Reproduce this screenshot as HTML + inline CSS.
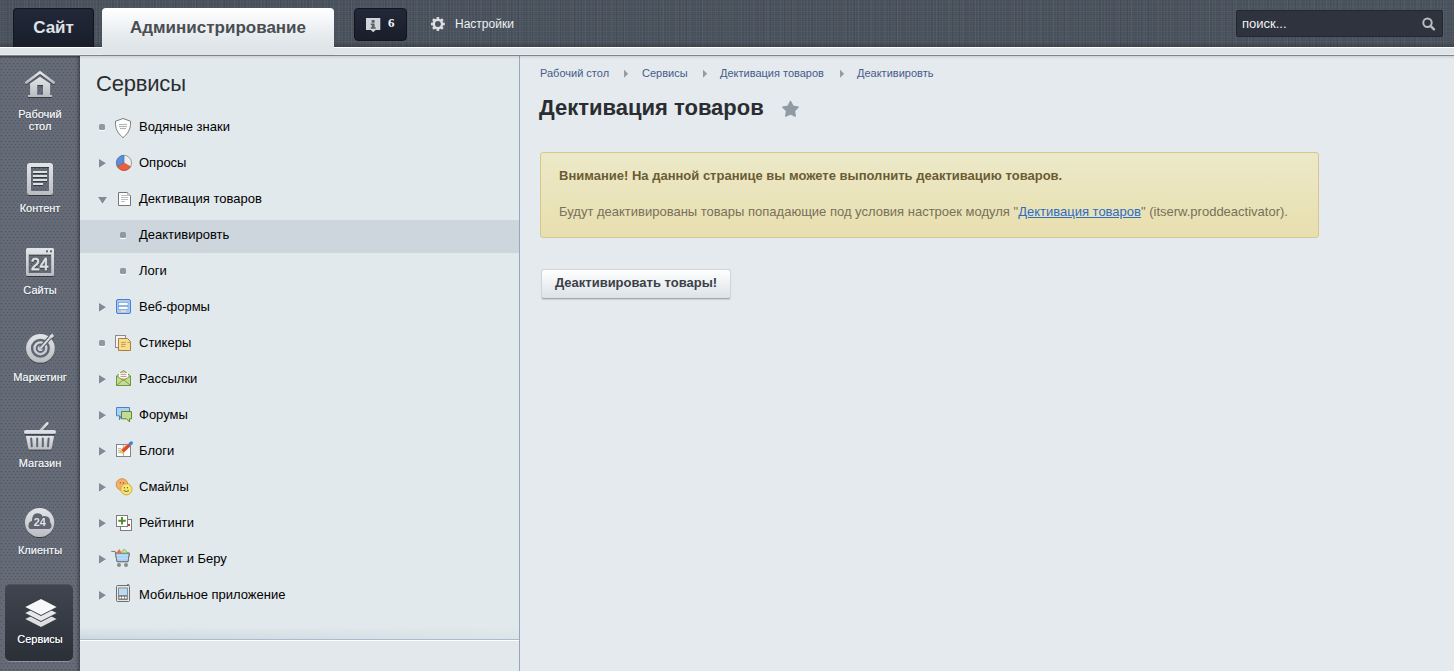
<!DOCTYPE html>
<html><head><meta charset="utf-8">
<style>
*{margin:0;padding:0;box-sizing:border-box}
html,body{width:1454px;height:671px;overflow:hidden}
body{position:relative;background:#e4eaed;font-family:"Liberation Sans",sans-serif;}
.abs{position:absolute}
#hdr{left:0;top:0;width:1454px;height:47px;background-color:#4b535e;
 background-image:linear-gradient(rgba(0,0,0,0) 90%,rgba(0,0,0,.2)),repeating-linear-gradient(90deg,rgba(255,255,255,.035) 0 1px,transparent 1px 3px),repeating-linear-gradient(90deg,rgba(0,0,0,.06) 0 1px,transparent 1px 7px),repeating-linear-gradient(90deg,rgba(255,255,255,.03) 0 1px,transparent 1px 13px),repeating-linear-gradient(0deg,rgba(0,0,0,.05) 0 1px,transparent 1px 2px),repeating-linear-gradient(0deg,rgba(255,255,255,.025) 0 1px,transparent 1px 5px);}
#strip{left:0;top:47px;width:1454px;height:8px;background:#dee5e8;border-top:1px solid #fff;}
#strip2{left:0;top:54px;width:1454px;height:1px;background:#e9eef0}
#dline{left:0;top:55px;width:1454px;height:1px;background:#7e8387}
#site{left:13px;top:8px;width:81px;height:39px;background:linear-gradient(#222839,#1a1e2a);border:1px solid #12151d;border-bottom:0;border-radius:4px 4px 0 0;color:#dfe3e8;font-weight:bold;font-size:17px;text-align:center;line-height:19px;padding-top:9px}
#admin{left:102px;top:8px;width:232px;height:47px;background:linear-gradient(#fff,#e6ebee 60%,#dfe5e8 83%);border-radius:4px 4px 0 0;color:#4a4d52;font-weight:bold;font-size:17px;text-align:center;line-height:19px;padding-top:10px}
#notif{left:354px;top:8px;width:53px;height:33px;background:linear-gradient(#222839,#1a1e2a);border:1px solid #12151d;border-radius:4px}
#n6{left:388px;top:15px;color:#f4f6f8;font-size:13px;font-weight:bold;line-height:15px;font-family:"Liberation Serif",serif}
#settings{left:455px;top:17px;color:#eef1f4;font-size:12px;line-height:14px}
#search{left:1236px;top:10px;width:207px;height:27px;background:#2e333e;border:1px solid #22262e;border-radius:2px;color:#eef1f4;font-size:13px;line-height:25px;padding-left:5px}
#side{left:0;top:56px;width:80px;height:615px;background-color:#656b77;
 background-image:radial-gradient(circle at 1.5px 1.5px,rgba(30,34,42,.27) 0.6px,transparent 1.15px),radial-gradient(circle at 1.5px 1.5px,rgba(30,34,42,.27) 0.55px,transparent 1.05px);background-size:4px 6px,4px 6px;background-position:0 0,2px 3px;box-shadow:inset -3px 0 3px -1px rgba(0,0,0,.3), inset 0 2px 2px -1px rgba(0,0,0,.4)}
#panel{left:80px;top:56px;width:439px;height:615px;background:#e2e9ec;}
#vline{left:519px;top:56px;width:1px;height:615px;background:#93a8bf}
#hline{left:80px;top:639px;width:439px;height:1px;background:#a9bccb}
#hshadow{left:80px;top:627px;width:439px;height:12px;background:linear-gradient(rgba(130,155,180,0),rgba(130,155,180,.22));-webkit-mask-image:linear-gradient(to right,#000,rgba(0,0,0,.25))}
#hline2{left:80px;top:640px;width:439px;height:1px;background:#fff}
#cshadow{left:80px;top:56px;width:1374px;height:3px;background:linear-gradient(rgba(0,0,0,.1),rgba(0,0,0,0))}
.sbi{position:absolute;left:0;width:80px;text-align:center;color:#eef1f4;font-size:11px;line-height:12px;text-shadow:0 0 0.6px rgba(255,255,255,.7),0 1px 1px rgba(0,0,0,.25)}
.mtitle{left:96px;top:71px;font-size:22px;color:#2b2e31;line-height:25px;letter-spacing:-0.2px}
.mi{position:absolute;left:139px;font-size:13px;color:#000;line-height:16px}
.bul{position:absolute;width:6px;height:6px;background:#8f99a3;border-radius:1.5px;box-shadow:0 1px 0 #fff}
.ico{position:absolute;overflow:visible}
#sel{left:80px;top:220px;width:439px;height:33px;background:#ccd6dc}
#svc{left:5px;top:584px;width:68px;height:77px;border-radius:5px;background:linear-gradient(#41454f,#2b2f38);box-shadow:0 1px 0 rgba(255,255,255,.25), inset 0 1px 0 rgba(255,255,255,.08)}
.bc{position:absolute;top:67px;font-size:11px;color:#475b8a;line-height:13px}
#title{left:539px;top:95px;font-size:22px;font-weight:bold;color:#2a2d31;line-height:26px}
#alert{left:540px;top:152px;width:779px;height:86px;background:linear-gradient(#ece9c9,#e8dfae);border:1px solid #d6c88c;border-radius:3px}
#at1{left:559px;top:168px;font-size:13px;font-weight:bold;color:#6b5c34;line-height:16px}
#at2{left:559px;top:204px;font-size:13px;color:#77705a;line-height:16px}
#at2 a{color:#2f6cc5;text-decoration:underline}
#btn{left:541px;top:269px;width:190px;height:30px;background:linear-gradient(#fff,#dce2e5);border:1px solid #cfd5d8;border-bottom-color:#a3abb0;border-radius:3px;font-size:13px;font-weight:bold;color:#3b4048;text-align:center;line-height:15px;padding-top:5px;box-shadow:0 1px 1px rgba(0,0,0,.12)}
</style></head><body>
<div id="hdr" class="abs"></div>
<div id="strip" class="abs"></div>
<div id="strip2" class="abs"></div>
<div id="dline" class="abs"></div>
<div id="site" class="abs">Сайт</div>
<div id="admin" class="abs">Администрирование</div>
<div id="notif" class="abs"></div>
<svg class="ico" style="left:366px;top:18px" width="16" height="16"><path d="M0 0 H14.3 V12 H9.6 L7.2 14.3 L4.8 12 H0 Z" fill="#d1d5d9"/><path d="M5.6 2 H8.6 V4.7 H5.6 Z M4.7 5.6 H8.6 V9.2 H9.7 V10.8 H4.7 V9.2 H5.8 V7 H4.7 Z" fill="#5d6168"/></svg>
<div id="n6" class="abs">6</div>
<svg class="ico" style="left:428px;top:14px" width="20" height="20"><g transform="translate(9.9,10)"><circle r="4.15" fill="none" stroke="#dcdfe2" stroke-width="2.5"/><rect x="-1.3" y="-6.9" width="2.6" height="3" transform="rotate(0)" fill="#dcdfe2"/><rect x="-1.3" y="-6.9" width="2.6" height="3" transform="rotate(45)" fill="#dcdfe2"/><rect x="-1.3" y="-6.9" width="2.6" height="3" transform="rotate(90)" fill="#dcdfe2"/><rect x="-1.3" y="-6.9" width="2.6" height="3" transform="rotate(135)" fill="#dcdfe2"/><rect x="-1.3" y="-6.9" width="2.6" height="3" transform="rotate(180)" fill="#dcdfe2"/><rect x="-1.3" y="-6.9" width="2.6" height="3" transform="rotate(225)" fill="#dcdfe2"/><rect x="-1.3" y="-6.9" width="2.6" height="3" transform="rotate(270)" fill="#dcdfe2"/><rect x="-1.3" y="-6.9" width="2.6" height="3" transform="rotate(315)" fill="#dcdfe2"/></g></svg>
<div id="settings" class="abs">Настройки</div>
<div id="search" class="abs">поиск...</div>
<svg class="ico" style="left:1420px;top:16px" width="18" height="16"><circle cx="7.5" cy="6.8" r="4.2" fill="none" stroke="#b9bdc2" stroke-width="2"/><path d="M10.5 9.8 L14 13.3" stroke="#b9bdc2" stroke-width="2.4" stroke-linecap="round"/></svg>

<div id="side" class="abs"></div>
<div id="svc" class="abs"></div>

<svg class="ico" style="left:0;top:56px" width="80" height="615">
 <defs>
  <linearGradient id="gi" x1="0" y1="0" x2="0" y2="1"><stop offset="0" stop-color="#e3e6e8"/><stop offset="1" stop-color="#b9bdc1"/></linearGradient>
  <filter id="sh" x="-20%" y="-20%" width="140%" height="140%"><feDropShadow dx="0" dy="1" stdDeviation="0.6" flood-color="#000" flood-opacity="0.45"/></filter>
 </defs>
 <g filter="url(#sh)">
 <!-- house: abs y offset 56 -->
 <g transform="translate(0,-56)">
  <path d="M26.3 82.5 L40 72.3 L53.7 82.5" fill="none" stroke="url(#gi)" stroke-width="2.6" stroke-linecap="round" stroke-linejoin="miter"/>
  <path d="M30.1 83.5 L40 76.8 L50.1 83.5 V95 H52 V97 H28 V95 H30.1 Z M37.2 85 V94.8 H43 V85 Z" fill="url(#gi)" fill-rule="evenodd"/>
 </g>
 <!-- content doc -->
 <g transform="translate(0,-56)">
  <path d="M30 163 H50 Q53 163 53 166 V192 Q53 195 50 195 H30 Q27 195 27 192 V166 Q27 163 30 163 Z M31 167 V191 H49 V167 Z" fill="url(#gi)" fill-rule="evenodd"/>
  <path d="M33 172h14M33 176h14M33 180h14M33 184h10" stroke="#dde0e3" stroke-width="2"/>
 </g>
 <!-- sites -->
 <g transform="translate(0,-56)">
  <path d="M27.5 248 H52.5 Q54 248 54 249.5 V274.5 Q54 276 52.5 276 H27.5 Q26 276 26 274.5 V249.5 Q26 248 27.5 248 Z M28.7 254.5 V273 H51.2 V254.5 Z" fill="url(#gi)" fill-rule="evenodd"/>
  <rect x="46" y="250.3" width="2" height="2" fill="#5f6571"/><rect x="50" y="250.3" width="2" height="2" fill="#5f6571"/>
  <text x="31" y="269.9" font-family="Liberation Sans" font-size="16.5" stroke="#dfe2e5" stroke-width="0.7" textLength="17.6" lengthAdjust="spacingAndGlyphs" fill="#dfe2e5">24</text>
 </g>
 <!-- target -->
 <g transform="translate(0,-56)">
  <circle cx="40.4" cy="348.3" r="14.3" fill="url(#gi)"/>
  <circle cx="40.4" cy="348.3" r="8.3" fill="none" stroke="#5f6571" stroke-width="2.4"/>
  <circle cx="40.4" cy="348.3" r="3.75" fill="none" stroke="#5f6571" stroke-width="1.9"/>
  <path d="M40.4 348.3 L50 337.5" stroke="#5f6571" stroke-width="4.2"/>
  <path d="M40.4 348.3 L52 335.3" stroke="#d9dcdf" stroke-width="2"/>
  <path d="M49.5 336 L52.5 333.5 L54 336 L51.8 338.3 Z" fill="#d9dcdf"/>
 </g>
 <!-- basket -->
 <g transform="translate(0,-56)">
  <path d="M47.3 423.3 L40.3 430.8" stroke="url(#gi)" stroke-width="2.6" stroke-linecap="round"/>
  <rect x="24" y="430" width="32" height="3.8" rx="1.9" fill="#dde0e3"/>
  <path d="M25.9 436 H54 L51.8 448 Q51.5 449.6 50 449.6 H30 Q28.5 449.6 28.2 448 Z" fill="url(#gi)"/>
  <path d="M31.2 438.5 L31.8 446.3 M37.2 438.5 V446.3 M42.8 438.5 V446.3 M48.6 438.5 L48 446.3" stroke="#5f6571" stroke-width="2" stroke-linecap="round"/>
 </g>
 <!-- clients -->
 <g transform="translate(0,-56)">
  <circle cx="39.6" cy="522.5" r="14.6" fill="url(#gi)"/>
  <path d="M30.5 529 Q28.5 529 28.5 525.5 Q28.5 521.5 32 521 Q32 513.5 37.3 513.3 Q41.5 513.3 42.5 516.5 Q44 515.5 46 516.2 Q50.6 517.5 50 522 Q51.5 523.5 51.5 526 Q51.3 529 48.5 529 Z" fill="#5f6571"/>
  <text x="39.8" y="526.3" text-anchor="middle" font-family="Liberation Sans" font-weight="bold" font-size="11" fill="#dfe2e5">24</text>
 </g>
 </g>
</svg>

<svg class="ico" style="left:0;top:580px" width="80" height="60"><g transform="translate(0,-580)">
 <path d="M41 611.3 L56.6 619.1 L41 627 L25.3 619.1 Z" fill="#dcdee1"/>
 <path d="M41 605.3 L56.6 613.1 L41 621 L25.3 613.1 Z" fill="#e6e8ea" stroke="#383c46" stroke-width="1.6" stroke-linejoin="miter"/>
 <path d="M41 605.3 L56.6 613.1 L41 621 L25.3 613.1 Z" fill="#e6e8ea"/>
 <path d="M41 599 L56.6 607 L41 615 L25.3 607 Z" fill="#f7f8f9" stroke="#3a3e48" stroke-width="1.6" stroke-linejoin="miter"/>
 <path d="M41 599 L56.6 607 L41 615 L25.3 607 Z" fill="#f7f8f9"/>
</g></svg>
<div class="sbi" style="top:108px">Рабочий<br>стол</div>
<div class="sbi" style="top:202px">Контент</div>
<div class="sbi" style="top:284px">Сайты</div>
<div class="sbi" style="top:371px">Маркетинг</div>
<div class="sbi" style="top:457px">Магазин</div>
<div class="sbi" style="top:544px">Клиенты</div>
<div class="sbi" style="top:633px;color:#fff">Сервисы</div>

<div id="panel" class="abs"></div>
<div id="vline" class="abs"></div>
<div id="cshadow" class="abs"></div>
<div id="hshadow" class="abs"></div>
<div id="hline" class="abs"></div>
<div id="hline2" class="abs"></div>
<div id="sel" class="abs"></div>

<div class="abs mtitle">Сервисы</div>
<div class="bul" style="left:99px;top:124px"></div>
<svg class="ico" style="left:112px;top:114px" width="24" height="26"><path d="M11 4.5 L3.5 7.2 L3.5 10.5 C4 16.5 7 20.5 11 23.6 C15 20.5 18 16.5 18.5 10.5 L18.5 7.2 Z" fill="#fff" stroke="#7b7b7b" stroke-width="1"/><path d="M7 10.6h8M7 12.6h8M8 14.6h6" stroke="#a3a3a3" stroke-width="0.9"/></svg>
<div class="mi" style="top:119px">Водяные знаки</div>
<svg class="ico" style="left:96px;top:156px" width="14" height="16"><path d="M3 3 L10 7.3 L3 11.7 Z" fill="#fff" transform="translate(0,0.8)"/><path d="M3 3 L10 7.3 L3 11.7 Z" fill="#808c99"/></svg>
<svg class="ico" style="left:112px;top:150px" width="24" height="26"><circle cx="12" cy="12.9" r="7.6" fill="#ececec" stroke="#8a8a8a" stroke-width="0.8"/><path d="M12 12.9 L12 5.3 A7.6 7.6 0 0 0 5.4 16.7 Z" fill="#5a8fd6" stroke="#3f6fb8" stroke-width="0.6"/><path d="M12 12.9 L5.4 16.7 A7.6 7.6 0 0 0 18.6 16.7 Z" fill="#e4623f" stroke="#c8401f" stroke-width="0.6"/></svg>
<div class="mi" style="top:155px">Опросы</div>
<svg class="ico" style="left:96px;top:190px" width="14" height="16"><path d="M2 7 L11 7 L6.5 13.7 Z" fill="#fff" transform="translate(0,0.8)"/><path d="M2 7 L11 7 L6.5 13.7 Z" fill="#808c99"/></svg>
<svg class="ico" style="left:112px;top:186px" width="24" height="26"><path d="M6.5 6.5 H15.5 L18.5 9.5 V19.5 H6.5 Z" fill="#fff" stroke="#767676" stroke-width="1"/><path d="M15.5 6.5 V9.5 H18.5" fill="#ddd" stroke="#999" stroke-width="0.6"/><path d="M9 9.5h6M9 11.5h7M9 13.5h7M9 15.5h4" stroke="#b8b8b8" stroke-width="0.9"/></svg>
<div class="mi" style="top:191px">Дективация товаров</div>
<div class="bul" style="left:120px;top:232px"></div>
<div class="mi" style="top:227px">Деактивировть</div>
<div class="bul" style="left:120px;top:268px"></div>
<div class="mi" style="top:263px">Логи</div>
<svg class="ico" style="left:96px;top:300px" width="14" height="16"><path d="M3 3 L10 7.3 L3 11.7 Z" fill="#fff" transform="translate(0,0.8)"/><path d="M3 3 L10 7.3 L3 11.7 Z" fill="#808c99"/></svg>
<svg class="ico" style="left:112px;top:294px" width="24" height="26"><rect x="4.5" y="5.5" width="14" height="14" rx="1.5" fill="#a9c9ee" stroke="#4a7dcb" stroke-width="1"/><rect x="6.5" y="8.6" width="9.5" height="2.6" fill="#fff" stroke="#5a8ad0" stroke-width="0.5"/><rect x="6.5" y="12.6" width="9.5" height="2.6" fill="#fff" stroke="#5a8ad0" stroke-width="0.5"/><rect x="9" y="16.3" width="5" height="1.6" fill="#f1d9c8"/></svg>
<div class="mi" style="top:299px">Веб-формы</div>
<div class="bul" style="left:99px;top:340px"></div>
<svg class="ico" style="left:112px;top:330px" width="24" height="26"><rect x="3.5" y="5.5" width="10" height="12" fill="#f4f4f4" stroke="#8b8b8b" stroke-width="1"/><path d="M6.5 8.5 H15.5 L18.5 11.5 V20.5 H6.5 Z" fill="#f7de8e" stroke="#b07a3e" stroke-width="1"/><path d="M9 12.4h5M9 14.4h5M9 16.4h4M15.5 12.4h3" stroke="#c69250" stroke-width="0.9"/></svg>
<div class="mi" style="top:335px">Стикеры</div>
<svg class="ico" style="left:96px;top:372px" width="14" height="16"><path d="M3 3 L10 7.3 L3 11.7 Z" fill="#fff" transform="translate(0,0.8)"/><path d="M3 3 L10 7.3 L3 11.7 Z" fill="#808c99"/></svg>
<svg class="ico" style="left:112px;top:366px" width="24" height="26"><path d="M4.5 10 L11.5 4.5 L18.5 10 V19.5 H4.5 Z" fill="#c6da98" stroke="#6b9a3b" stroke-width="1"/><rect x="7" y="7" width="9" height="5" fill="#fff"/><path d="M8.5 8.3h6M8.5 10.4h6" stroke="#d9707a" stroke-width="0.9"/><path d="M4.5 10 L11.5 14.5 L18.5 10 M4.5 19.5 L11.5 13.5 L18.5 19.5" fill="none" stroke="#6b9a3b" stroke-width="0.9"/></svg>
<div class="mi" style="top:371px">Рассылки</div>
<svg class="ico" style="left:96px;top:408px" width="14" height="16"><path d="M3 3 L10 7.3 L3 11.7 Z" fill="#fff" transform="translate(0,0.8)"/><path d="M3 3 L10 7.3 L3 11.7 Z" fill="#808c99"/></svg>
<svg class="ico" style="left:112px;top:402px" width="24" height="26"><path d="M4.5 5.5 H17.5 V13.8 H9 L7.5 17.8 V13.8 H4.5 Z" fill="#a9d1f3" stroke="#4a80cc" stroke-width="1" stroke-linejoin="round"/><path d="M9.5 9.5 H19.5 V16.8 H17.5 L17.6 20 L14.5 16.8 H9.5 Z" fill="#c6da98" stroke="#5b8a2c" stroke-width="1" stroke-linejoin="round"/></svg>
<div class="mi" style="top:407px">Форумы</div>
<svg class="ico" style="left:96px;top:444px" width="14" height="16"><path d="M3 3 L10 7.3 L3 11.7 Z" fill="#fff" transform="translate(0,0.8)"/><path d="M3 3 L10 7.3 L3 11.7 Z" fill="#808c99"/></svg>
<svg class="ico" style="left:112px;top:438px" width="24" height="26"><rect x="4.5" y="6.5" width="14" height="12" fill="#fff" stroke="#838383" stroke-width="1"/><path d="M11.4 6.5 V18.5" stroke="#9a9a9a" stroke-width="0.8"/><path d="M6 10.4h3M6 12.4h3M6 14.4h3" stroke="#aaa" stroke-width="0.9"/><path d="M10.3 13.3 L17.6 6.6" stroke="#e0461f" stroke-width="3.6"/><path d="M9.2 12.2 L16.5 5.5" stroke="#f08a60" stroke-width="1"/><path d="M8.8 14.7 L10.6 13" stroke="#f2c83a" stroke-width="3.4"/><path d="M17.4 6.8 L18.2 6" stroke="#fff" stroke-width="3.6"/><path d="M18.2 6 L19.3 5" stroke="#4a7fd0" stroke-width="3.4" stroke-linecap="round"/></svg>
<div class="mi" style="top:443px">Блоги</div>
<svg class="ico" style="left:96px;top:480px" width="14" height="16"><path d="M3 3 L10 7.3 L3 11.7 Z" fill="#fff" transform="translate(0,0.8)"/><path d="M3 3 L10 7.3 L3 11.7 Z" fill="#808c99"/></svg>
<svg class="ico" style="left:112px;top:474px" width="24" height="26"><circle cx="10" cy="10.5" r="5.8" fill="#f6b06a" stroke="#c98a34" stroke-width="0.9"/><path d="M8.3 8v1.6M11.3 8v1.6" stroke="#7a5a30" stroke-width="0.9"/><circle cx="14.4" cy="15.3" r="5.6" fill="#fbe46a" stroke="#c9a434" stroke-width="0.9"/><path d="M12.4 13v1.4M15.4 13v1.4" stroke="#555" stroke-width="0.9"/><path d="M11.5 16.6 Q14.2 18.4 17 16.6" fill="none" stroke="#555" stroke-width="0.9"/></svg>
<div class="mi" style="top:479px">Смайлы</div>
<svg class="ico" style="left:96px;top:516px" width="14" height="16"><path d="M3 3 L10 7.3 L3 11.7 Z" fill="#fff" transform="translate(0,0.8)"/><path d="M3 3 L10 7.3 L3 11.7 Z" fill="#808c99"/></svg>
<svg class="ico" style="left:112px;top:510px" width="24" height="26"><rect x="8.5" y="9.5" width="11" height="11" fill="#fff" stroke="#7d7d7d" stroke-width="1"/><rect x="4.5" y="5.5" width="11" height="11" fill="#fff" stroke="#7d7d7d" stroke-width="1"/><path d="M10 7v7.5M6.3 10.8h7.5" stroke="#4f8d2a" stroke-width="1.9"/><rect x="16" y="14" width="2" height="2" fill="#e0301c"/></svg>
<div class="mi" style="top:515px">Рейтинги</div>
<svg class="ico" style="left:96px;top:552px" width="14" height="16"><path d="M3 3 L10 7.3 L3 11.7 Z" fill="#fff" transform="translate(0,0.8)"/><path d="M3 3 L10 7.3 L3 11.7 Z" fill="#808c99"/></svg>
<svg class="ico" style="left:112px;top:546px" width="24" height="26"><path d="M-0.7 5.4 H3.2 L5 15.7 H16 L17.3 7.1 H3.4" fill="none" stroke="#777" stroke-width="1"/><path d="M3.6 7.6 H16.8 L15.6 15.2 H5.3 Z" fill="#a9d0f8"/><path d="M4.2 9.8 H16.4 M4.6 12.4 H16" stroke="#c6e2fb" stroke-width="0.8"/><path d="M3.4 7.1 H17.3 L16 15.7 H5 Z" fill="none" stroke="#777" stroke-width="1"/><path d="M4 7 L7.5 3 L9.5 7 Z" fill="#f26a3a"/><path d="M8.5 7 L12.3 3 L16 7 Z" fill="#c9df9c" stroke="#6b9a3b" stroke-width="0.6"/><circle cx="7" cy="19" r="2" fill="#8a8a8a"/><circle cx="14" cy="19" r="2" fill="#8a8a8a"/></svg>
<div class="mi" style="top:551px">Маркет и Беру</div>
<svg class="ico" style="left:96px;top:588px" width="14" height="16"><path d="M3 3 L10 7.3 L3 11.7 Z" fill="#fff" transform="translate(0,0.8)"/><path d="M3 3 L10 7.3 L3 11.7 Z" fill="#808c99"/></svg>
<svg class="ico" style="left:112px;top:582px" width="24" height="26"><rect x="4.5" y="3.5" width="13" height="16" rx="1" fill="#e6e6e6" stroke="#6f6f6f" stroke-width="1"/><rect x="15" y="2.2" width="2.2" height="1.6" fill="#6f6f6f"/><rect x="6.3" y="5.6" width="9.4" height="12.2" fill="#666"/><rect x="7" y="6.3" width="8" height="7" fill="#b8dcf6"/><rect x="7.3" y="14.6" width="2" height="2" fill="#fff"/><rect x="10" y="14.6" width="2" height="2" fill="#fff"/><rect x="12.7" y="14.6" width="2" height="2" fill="#fff"/></svg>
<div class="mi" style="top:587px">Мобильное приложение</div>

<div class="bc" style="left:540px">Рабочий стол</div>
<svg class="ico" style="left:622px;top:69px" width="8" height="8"><path d="M2 0.8 L6.2 4.8 L2 8.8 Z" fill="#979b9f"/></svg>
<div class="bc" style="left:642px">Сервисы</div>
<svg class="ico" style="left:701px;top:69px" width="8" height="8"><path d="M2 0.8 L6.2 4.8 L2 8.8 Z" fill="#979b9f"/></svg>
<div class="bc" style="left:720px">Дективация товаров</div>
<svg class="ico" style="left:838px;top:69px" width="8" height="8"><path d="M2 0.8 L6.2 4.8 L2 8.8 Z" fill="#979b9f"/></svg>
<div class="bc" style="left:857px">Деактивировть</div>

<div id="title" class="abs">Дективация товаров</div>
<svg class="ico" style="left:780px;top:99px" width="21" height="20"><path d="M10.50 2.40 L13.03 7.12 L18.30 8.07 L14.59 11.93 L15.32 17.23 L10.50 14.90 L5.68 17.23 L6.41 11.93 L2.70 8.07 L7.97 7.12 Z" fill="#8f9aa5" stroke="#8f9aa5" stroke-width="1.2" stroke-linejoin="round"/></svg>
<div id="alert" class="abs"></div>
<div id="at1" class="abs">Внимание! На данной странице вы можете выполнить деактивацию товаров.</div>
<div id="at2" class="abs">Будут деактивированы товары попадающие под условия настроек модуля "<a>Дективация товаров</a>" (itserw.proddeactivator).</div>
<div id="btn" class="abs">Деактивировать товары!</div>
</body></html>
